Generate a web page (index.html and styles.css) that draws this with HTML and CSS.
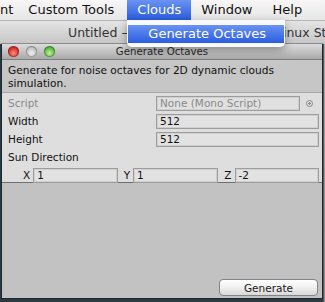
FILE: index.html
```html
<html>
<head>
	<meta charset="UTF-8">
	<link rel="stylesheet" href="styles.css">
</head>
<body>
	<div class="menubar">
		<span class="menu-item menu-cut">nt</span>
		<span class="menu-item menu-wide">Custom Tools</span>
		<span class="menu-item menu-open">Clouds
			<div class="dropdown">
				<div class="dropdown-item">Generate Octaves</div>
			</div>
		</span>
		<span class="menu-item">Window</span>
		<span class="menu-item">Help</span>
	</div>

	<div class="app-titlebar">
		<span class="doc-left">Untitled –</span>
		<span class="doc-right">Linux Standalone</span>
	</div>

	<div class="stage">
		<div class="window">
			<div class="win-titlebar">
				<div class="lights">
					<span class="light light-red"></span>
					<span class="light light-gray"></span>
					<span class="light light-green"></span>
				</div>
				<div class="win-title">Generate Octaves</div>
				<div></div>
			</div>

			<div class="helpbox">Generate for noise octaves for 2D dynamic clouds simulation.</div>

			<div class="inspector">
				<div class="row disabled">
					<span class="label">Script</span>
					<span class="field object-field">None (Mono Script)</span>
					<span class="picker"><span class="picker-dot"></span></span>
				</div>
				<div class="row">
					<span class="label">Width</span>
					<span class="field">512</span>
				</div>
				<div class="row">
					<span class="label">Height</span>
					<span class="field">512</span>
				</div>
				<div class="row">
					<span class="label">Sun Direction</span>
				</div>
				<div class="row vector-row">
					<div class="axis"><span class="axis-label">X</span><span class="field">1</span></div>
					<div class="axis"><span class="axis-label">Y</span><span class="field">1</span></div>
					<div class="axis"><span class="axis-label">Z</span><span class="field">-2</span></div>
				</div>
			</div>

			<div class="footer">
				<button class="btn">Generate</button>
			</div>
		</div>
		<div class="editor-edge"></div>
	</div>
</body>
</html>
```

FILE: styles.css
```css
body {
	margin: 0;
	width: 325px;
	height: 302px;
	overflow: hidden;
	background-color: #2b3943;
	font-family: "DejaVu Sans", sans-serif;
}

/* mac menu bar */

.menubar {
	position: relative;
	z-index: 2;
	display: flex;
	height: 20px;
	background: linear-gradient(#f8f6f6, #e6e6e6);
	border-bottom: 1px solid #b4b4b4;
	font-size: 13px;
	color: #111;
	white-space: nowrap;
}

.menu-item {
	position: relative;
	padding: 0 10px;
	line-height: 20px;
}

.menu-cut {
	margin-left: -10px;
	padding-right: 5px;
}

.menu-wide {
	padding-right: 13px;
}

.menu-open {
	background: linear-gradient(#6a93f2, #2a5ce0);
	color: #fff;
}

.dropdown {
	position: absolute;
	left: 0;
	top: 20px;
	width: 158px;
	height: 27px;
	box-sizing: border-box;
	padding: 5px 1px 0;
	background-color: rgba(250, 250, 250, 0.97);
	border-radius: 0 0 5px 5px;
	box-shadow: 0 3px 8px rgba(0, 0, 0, 0.35);
}

.dropdown-item {
	height: 18px;
	line-height: 18px;
	padding-left: 20px;
	background: linear-gradient(#6a93f2, #2a5ce0);
	color: #fff;
	font-size: 13px;
}

/* unity main window title, mostly hidden */

.app-titlebar {
	display: flex;
	align-items: center;
	height: 23px;
	padding-left: 68px;
	background: linear-gradient(#e4e4e4, #c6c6c6);
	font-size: 12.5px;
	color: #333;
	white-space: nowrap;
	overflow: hidden;
}

.doc-left {
	width: 208px;
	overflow: hidden;
	flex-shrink: 0;
}

/* editor window */

.stage {
	display: flex;
	height: 258px;
}

.window {
	width: 320px;
	height: 254px;
	margin-left: 2px;
	display: flex;
	flex-direction: column;
	background-color: #c2c2c2;
	box-shadow: 0 0 0 1px rgba(0, 0, 0, 0.3);
}

.editor-edge {
	flex: 1;
	margin-left: 1px;
	background: linear-gradient(#a9a9a9, #8c8c8c);
	border-left: 1px solid #555;
}

.win-titlebar {
	display: grid;
	grid-template-columns: 1fr auto 1fr;
	align-items: center;
	height: 15px;
	background: linear-gradient(#dcdcdc, #a9a9a9);
	border-bottom: 1px solid #7f7f7f;
}

.lights {
	display: flex;
	gap: 7px;
	padding-left: 6px;
}

.light {
	width: 11px;
	height: 11px;
	border-radius: 50%;
	box-shadow: inset 0 0 0 1px rgba(0, 0, 0, 0.25);
}

.light-red {
	background: radial-gradient(circle at 50% 65%, #ff8f83, #d42a1f 60%, #9e1810);
}

.light-gray {
	background: radial-gradient(circle at 50% 65%, #f0f0f0, #c2c2c2 60%, #8e8e8e);
}

.light-green {
	background: radial-gradient(circle at 50% 65%, #c4f29e, #58b83c 60%, #2d7a1c);
}

.win-title {
	font-size: 10.2px;
	color: #2a2a2a;
}

.helpbox {
	height: 28px;
	padding: 4px 6px 0;
	background-color: #c6c6c6;
	border-bottom: 1px solid #a6a6a6;
	font-size: 10.6px;
	line-height: 13px;
	color: #111;
}

.inspector {
	height: 88px;
	padding-top: 1px;
	background-color: #dedede;
	border-bottom: 1px solid #6f6f6f;
}

.row {
	display: flex;
	align-items: center;
	height: 18px;
	padding: 0 3px 0 6px;
	font-size: 10.5px;
	color: #111;
}

.label {
	width: 148px;
	flex-shrink: 0;
}

.field {
	flex: 1;
	height: 13px;
	line-height: 13px;
	padding-left: 3px;
	border: 1px solid #9d9d9d;
	background-color: #e2e2e2;
	box-shadow: inset 0 0 0 1px #d0d0d0;
	white-space: nowrap;
	overflow: hidden;
}

.disabled {
	color: #8a8a8a;
}

.object-field {
	flex: none;
	width: 139px;
	background-color: #e0e0e0;
}

.picker {
	flex: 1;
	display: flex;
	justify-content: center;
	align-items: center;
}

.picker-dot {
	width: 5px;
	height: 5px;
	border: 1px solid #8a8a8a;
	border-radius: 50%;
	background: radial-gradient(circle, #8a8a8a 30%, transparent 40%);
}

.vector-row {
	padding-left: 21px;
	gap: 6px;
}

.axis {
	flex: 1;
	display: flex;
	align-items: center;
}

.axis-label {
	margin-right: 3px;
}

.footer {
	flex: 1;
	display: flex;
	justify-content: flex-end;
	align-items: flex-end;
	padding: 0 4px 2px 0;
}

.btn {
	width: 99px;
	height: 17px;
	padding: 0;
	border: 1px solid #848484;
	border-radius: 4px;
	background: linear-gradient(#ffffff, #f0f0f0 50%, #d8d8d8);
	font-family: "DejaVu Sans", sans-serif;
	font-size: 10.5px;
	color: #1a1a1a;
}
```
